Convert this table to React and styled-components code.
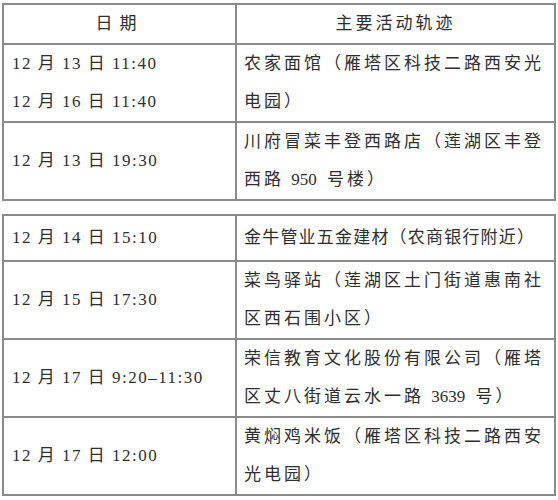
import React from "react";
import styled, { createGlobalStyle } from "styled-components";

const Global = createGlobalStyle`
  html, body { margin: 0; padding: 0; background: #fff; }
  body { font-family: "Liberation Serif", "Noto Sans CJK SC", serif; color: #2e2e2e; }
`;

const Page = styled.div`
  width: 558px;
  padding: 3px 2px 0 2px;
  box-sizing: border-box;
  display: flex;
  flex-direction: column;
  gap: 13px;
`;

const Table = styled.div`
  border: 2px solid #8a8a8a;
  display: flex;
  flex-direction: column;
`;

const Row = styled.div`
  display: grid;
  grid-template-columns: 231px 1fr;
  min-height: ${(p) => p.$min || 44}px;
  & + & { border-top: 2px solid #8a8a8a; }
`;

const Cell = styled.div`
  display: flex;
  flex-direction: column;
  justify-content: center;
  align-items: ${(p) => (p.$center ? "center" : "flex-start")};
  padding: 0 0 0 ${(p) => (p.$center ? 0 : p.$pad || 7)}px;
  font-size: 17px;
  line-height: 38px;
  letter-spacing: ${(p) => p.$ls ?? 3}px;
  white-space: nowrap;
  & + & { border-left: 2px solid #8a8a8a; }
`;

const Line = styled.div``;

const Num = styled.span`
  letter-spacing: 0;
  margin-right: 3px;
`;

const first = [
  { dates: ["12 月 13 日 11:40", "12 月 16 日 11:40"], place: [["农家面馆（雁塔区科技二路西安光"], ["电园）"]] },
  { dates: ["12 月 13 日 19:30"], place: [["川府冒菜丰登西路店（莲湖区丰登"], ["西路 ", "950", " 号楼）"]] },
];

const second = [
  { dates: ["12 月 14 日 15:10"], place: [["金牛管业五金建材（农商银行附近）"]], ls: 1.2, min: 44 },
  { dates: ["12 月 15 日 17:30"], place: [["菜鸟驿站（莲湖区土门街道惠南社"], ["区西石围小区）"]] },
  { dates: ["12 月 17 日 9:20–11:30"], place: [["荣信教育文化股份有限公司（雁塔"], ["区丈八街道云水一路 ", "3639", " 号）"]] },
  { dates: ["12 月 17 日 12:00"], place: [["黄焖鸡米饭（雁塔区科技二路西安"], ["光电园）"]] },
];

const Entry = ({ r }) => (
  <Row $min={r.min}>
    <Cell $ls={1.5} $pad={8}>
      {r.dates.map((d) => (
        <Line key={d}>{d}</Line>
      ))}
    </Cell>
    <Cell $ls={r.ls ?? 3}>
      {r.place.map((parts, i) => (
        <Line key={i}>
          {parts.map((t, j) => (j === 1 ? <Num key={j}>{t}</Num> : <span key={j}>{t}</span>))}
        </Line>
      ))}
    </Cell>
  </Row>
);

export default function App() {
  return (
    <>
      <Global />
      <Page>
        <Table>
          <Row $min={38}>
            <Cell $center $ls={7}>日期</Cell>
            <Cell $center $ls={3}>主要活动轨迹</Cell>
          </Row>
          {first.map((r, i) => (
            <Entry key={i} r={r} />
          ))}
        </Table>
        <Table>
          {second.map((r, i) => (
            <Entry key={i} r={r} />
          ))}
        </Table>
      </Page>
    </>
  );
}
